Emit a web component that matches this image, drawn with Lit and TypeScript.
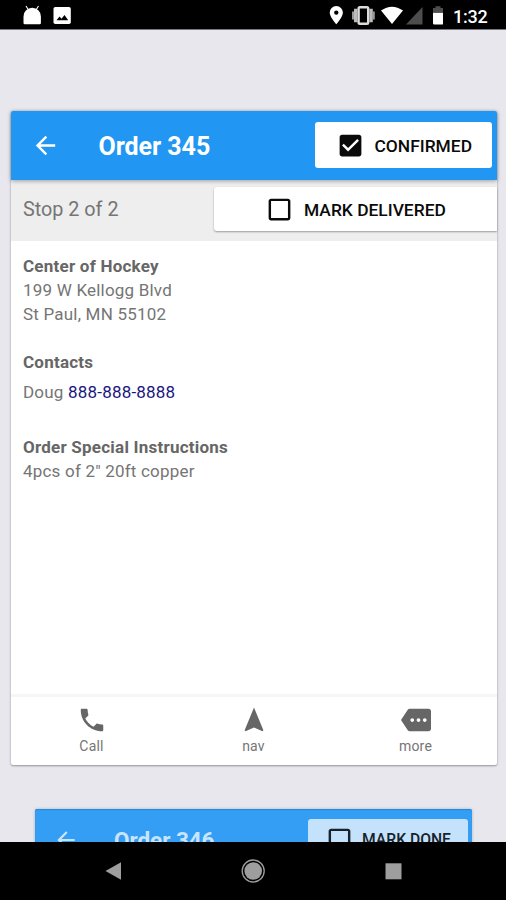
import { LitElement, html, svg, css } from "lit";
import { customElement, property } from "lit/decorators.js";

const paths: Record<string, string> = {
  back: "M20 11H7.83l5.59-5.59L12 4l-8 8 8 8 1.41-1.41L7.83 13H20v-2z",
  checked:
    "M19 3H5c-1.11 0-2 .9-2 2v14c0 1.1.89 2 2 2h14c1.11 0 2-.9 2-2V5c0-1.1-.89-2-2-2zm-9 14l-5-5 1.41-1.41L10 14.17l7.59-7.59L19 8l-9 9z",
  unchecked:
    "M19 5v14H5V5h14m0-2H5c-1.1 0-2 .9-2 2v14c0 1.1.9 2 2 2h14c1.1 0 2-.9 2-2V5c0-1.1-.9-2-2-2z",
  call: "M6.62 10.79c1.44 2.83 3.76 5.14 6.59 6.59l2.2-2.2c.27-.27.67-.36 1.02-.24 1.12.37 2.33.57 3.57.57.55 0 1 .45 1 1V20c0 .55-.45 1-1 1-9.39 0-17-7.61-17-17 0-.55.45-1 1-1h3.5c.55 0 1 .45 1 1 0 1.25.2 2.45.57 3.57.11.35.03.74-.25 1.02l-2.2 2.2z",
  nav: "M12 2L4.5 20.29l.71.71L12 18l6.79 3 .71-.71z",
  more: "M22 3H7c-.69 0-1.23.35-1.59.88L0 12l5.41 8.11c.36.53.9.89 1.59.89h15c1.1 0 2-.9 2-2V5c0-1.1-.9-2-2-2zM9 13.5c-.83 0-1.5-.67-1.5-1.5s.67-1.5 1.5-1.5 1.5.67 1.5 1.5-.67 1.5-1.5 1.5zm5 0c-.83 0-1.5-.67-1.5-1.5s.67-1.5 1.5-1.5 1.5.67 1.5 1.5-.67 1.5-1.5 1.5zm5 0c-.83 0-1.5-.67-1.5-1.5s.67-1.5 1.5-1.5 1.5.67 1.5 1.5-.67 1.5-1.5 1.5z",
};

@customElement("md-icon")
export class MdIcon extends LitElement {
  @property() name = "";
  static styles = css`
    :host { display: block; width: 29px; height: 29px; flex: none; }
    svg { display: block; width: 100%; height: 100%; fill: currentColor; }
  `;
  render() {
    return html`<svg viewBox="0 0 24 24">${svg`<path d=${paths[this.name]} />`}</svg>`;
  }
}

@customElement("status-bar")
export class StatusBar extends LitElement {
  static styles = css`
    :host { display: block; height: 29px; background: #000; border-bottom: 1px solid #77767b; flex: none; }
    .row { display: flex; height: 29px; align-items: center; }
    svg { display: block; flex: none; }
    .left { width: 253px; }
    .time {
      margin: 4px 0 0 10px;
      color: #fff;
      font: 500 18px/20px Roboto, sans-serif;
      letter-spacing: -0.2px;
    }
  `;
  render() {
    return html`<div class="row">
      <svg class="left" width="253" height="29" viewBox="0 0 253 29" fill="#fff">
        <path d="M26 6l2.5 4M38.5 6l-2.5 4" stroke="#fff" stroke-width="1.1" />
        <path d="M23.5 23V16.5a8.7 8.7 0 0 1 17.4 0V23q0 1.3-1.3 1.3H24.8q-1.3 0-1.3-1.3z" />
        <rect x="53.5" y="7" width="17.3" height="17" rx="1.8" />
        <path d="M56.5 20.3l3-3.8 2 2.3 3-3.8 3.7 5.3z" fill="#000" />
      </svg>
      <svg width="190" height="29" viewBox="253 0 190 29" fill="#fff">
        <path fill-rule="evenodd" d="M336.3 6a6.6 6.6 0 0 1 6.6 6.6c0 4.6-6.6 11.7-6.6 11.7s-6.6-7.1-6.6-11.7A6.6 6.6 0 0 1 336.3 6zm0 4.4a2.2 2.2 0 1 0 0 4.4a2.2 2.2 0 0 0 0-4.4z" />
        <path d="M353 11.5v8M373.8 11.5v8" stroke="#999" stroke-width="2" />
        <path d="M355.7 8.8v13.4M371.1 8.8v13.4" stroke="#bbb" stroke-width="3.4" />
        <rect x="358.6" y="7.2" width="9.6" height="16.6" rx="1.3" fill="#000" stroke="#ddd" stroke-width="2.4" />
        <path d="M381 10.5Q392 2.8 403 10.5L392 24z" />
        <path d="M422.5 7v17.5H406z" fill="#4d4d4d" />
        <path d="M433 8h2.5V6.2h5V8h3v4.5H433z" fill="#4d4d4d" />
        <path d="M433 12.7h10.5v10.2q0 1.6-1.6 1.6h-7.6q-1.3 0-1.3-1.6z" />
      </svg>
      <div class="time">1:32</div>
    </div>`;
  }
}

@customElement("check-button")
export class CheckButton extends LitElement {
  @property() icon = "unchecked";
  @property() label = "";
  static styles = css`
    :host {
      display: flex;
      align-items: center;
      box-sizing: border-box;
      gap: 10px;
      background: #fff;
      border-radius: 3px;
      color: #0a0a0a;
      font: 500 17.4px/24px Roboto, sans-serif;
      white-space: nowrap;
    }
    span { padding-top: 1px; }
  `;
  render() {
    return html`<md-icon name=${this.icon}></md-icon><span>${this.label}</span>`;
  }
}

@customElement("app-root")
export class AppRoot extends LitElement {
  static styles = css`
    :host {
      display: flex;
      flex-direction: column;
      width: 506px;
      height: 900px;
      overflow: hidden;
      background: #e8e7ee;
      color: #666;
      font-family: Roboto, sans-serif;
    }
    main { flex: 1; min-height: 0; overflow: hidden; padding: 81px 9.5px 0 10.5px; }
    .card {
      height: 654px;
      display: flex;
      flex-direction: column;
      background: #fff;
      border-radius: 2px;
      box-shadow: 0 1px 2px rgba(0, 0, 0, 0.32), 0 0 3px rgba(0, 0, 0, 0.12);
    }
    header {
      display: flex;
      align-items: center;
      height: 69px;
      box-sizing: border-box;
      padding: 0 4.5px 0 20px;
      background: #2196f3;
      color: #fff;
      border-radius: 2px 2px 0 0;
      box-shadow: 0 1px 4px rgba(0, 0, 0, 0.35);
      position: relative;
      flex: none;
    }
    .title { flex: 1; margin-left: 39px; padding-top: 2px; font-size: 25px; line-height: 30px; font-weight: 700; letter-spacing: -0.05px; }
    .confirm { width: 177px; height: 46px; padding-left: 20.5px; margin-bottom: 1px; }
    .stop {
      display: flex;
      align-items: flex-start;
      justify-content: space-between;
      height: 61px;
      box-sizing: border-box;
      padding: 7px 0 0 12.5px;
      background: #eee;
      font-size: 19.8px;
      line-height: 46px;
      flex: none;
      color: #757575;
    }
    .deliver {
      width: 283px;
      height: 44px;
      padding-left: 51.5px;
      border-radius: 3px 0 0 3px;
      box-shadow: 0 1px 2px rgba(0, 0, 0, 0.35);
    }
    .body { flex: 1; padding: 13px 12.5px 0; font-size: 17px; line-height: 24px; letter-spacing: 0.2px; color: #757575; }
    section { margin-bottom: 24px; }
    .contact { margin: 6px 0 31px; }
    b { display: block; font-weight: 700; color: #666; letter-spacing: 0.23px; }
    a { color: #1a1680; }
    footer {
      display: flex;
      height: 68px;
      border-top: 3px solid #f6f6f7;
      flex: none;
    }
    .tab {
      flex: 1;
      display: flex;
      flex-direction: column;
      align-items: center;
      padding-top: 8px;
      font-size: 14px;
      line-height: 18px;
      letter-spacing: 0.2px;
      color: #757575;
    }
    .tab md-icon { width: 30px; height: 30px; color: #666; margin-bottom: 1.5px; }
    .next {
      margin: 43.5px 24.5px 0;
      height: 120px;
      box-shadow: 0 0 3px rgba(0, 0, 0, 0.25);
    }
    .next header { height: 62px; background: #349df4; color: #c9e5fd; padding: 0 4px 0 18px; box-shadow: inset 0 1px 1px #2589da; }
    .next md-icon { width: 26px; height: 26px; }
    .next .title { margin-left: 35px; padding-top: 0; font-size: 22.5px; }
    .done { width: 160px; height: 42px; padding-left: 17px; gap: 8px; background: #c5e2fc; color: #17222b; font-size: 15.7px; }
    .system { height: 58px; flex: none; background: #000; }
    .system svg { display: block; }
  `;
  render() {
    return html`
      <status-bar></status-bar>
      <main>
        <div class="card">
          <header>
            <md-icon name="back"></md-icon>
            <div class="title">Order 345</div>
            <check-button class="confirm" icon="checked" label="CONFIRMED"></check-button>
          </header>
          <div class="stop">
            <span>Stop 2 of 2</span>
            <check-button class="deliver" label="MARK DELIVERED"></check-button>
          </div>
          <div class="body">
            <section><b>Center of Hockey</b>199 W Kellogg Blvd<br />St Paul, MN 55102</section>
            <b>Contacts</b>
            <div class="contact">Doug <a>888-888-8888</a></div>
            <section><b>Order Special Instructions</b>4pcs of 2" 20ft copper</section>
          </div>
          <footer>
            ${[["call", "Call"], ["nav", "nav"], ["more", "more"]].map(
              ([icon, label]) => html`<div class="tab"><md-icon name=${icon}></md-icon>${label}</div>`
            )}
          </footer>
        </div>
        <div class="card next">
          <header>
            <md-icon name="back"></md-icon>
            <div class="title">Order 346</div>
            <check-button class="done" label="MARK DONE"></check-button>
          </header>
        </div>
      </main>
      <div class="system">
        <svg width="506" height="58" viewBox="0 842 506 58" fill="#9e9e9e">
          <path d="M105.5 871L121 862.3v17.4z" />
          <circle cx="253.2" cy="871" r="8.8" />
          <circle cx="253.2" cy="871" r="11" fill="none" stroke="#9e9e9e" stroke-width="1.3" />
          <rect x="385.5" y="863.3" width="16" height="16" />
        </svg>
      </div>
    `;
  }
}
